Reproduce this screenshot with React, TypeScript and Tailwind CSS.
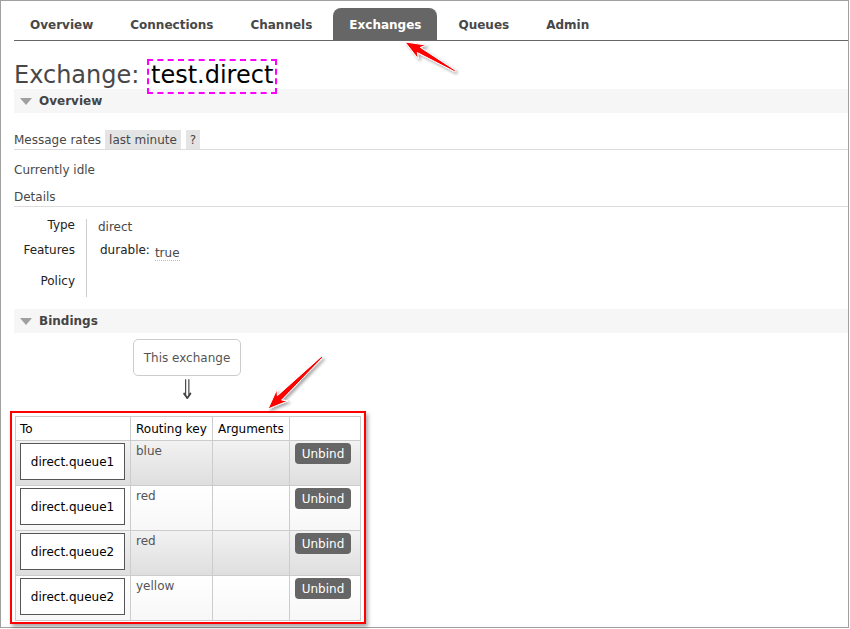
import React from 'react';

const tabs = ['Overview', 'Connections', 'Channels', 'Exchanges', 'Queues', 'Admin'];

const bindings = [
  { to: 'direct.queue1', key: 'blue' },
  { to: 'direct.queue1', key: 'red' },
  { to: 'direct.queue2', key: 'red' },
  { to: 'direct.queue2', key: 'yellow' },
];

// red annotation arrow, tail -> tip
function arrowPoints(x1: number, y1: number, x2: number, y2: number) {
  const len = Math.hypot(x2 - x1, y2 - y1);
  const dx = (x2 - x1) / len;
  const dy = (y2 - y1) / len;
  const nx = -dy;
  const ny = dx;
  const hl = 16;
  const hw = 8;
  const sw = 3;
  const tw = 0.8;
  const bx = x2 - dx * hl;
  const by = y2 - dy * hl;
  const wx = x2 - dx * (hl + 4);
  const wy = y2 - dy * (hl + 4);
  const pts = [
    [x1 + nx * tw, y1 + ny * tw],
    [bx + nx * sw, by + ny * sw],
    [wx + nx * hw, wy + ny * hw],
    [x2, y2],
    [wx - nx * hw, wy - ny * hw],
    [bx - nx * sw, by - ny * sw],
    [x1 - nx * tw, y1 - ny * tw],
  ];
  return pts.map((p) => `${p[0].toFixed(1)},${p[1].toFixed(1)}`).join(' ');
}

function SectionHeader({ title }: { title: string }) {
  return (
    <div className="flex h-[24px] items-center bg-[#f6f6f6]">
      <svg width="12" height="7" viewBox="0 0 12 7" className="ml-[6px] mr-[7px]">
        <polygon points="0,0 12,0 6,7" fill="#a0a0a0" />
      </svg>
      <span className="font-bold text-[#444]">{title}</span>
    </div>
  );
}

export default function App() {
  return (
    <div className="relative h-[629px] w-[850px] bg-white font-['DejaVu_Sans',sans-serif] text-[12px] leading-[14px] text-[#484848]">
      <div className="h-[628px] w-[849px] border border-[#a0a0a0] pl-[13px]">
        {/* tabs */}
        <div className="mt-[7px] flex h-[32px] items-stretch gap-[5px]">
          {tabs.map((t) => (
            <div
              key={t}
              className={`flex items-center rounded-t-[8px] px-[16px] pt-[2px] font-bold ${
                t === 'Exchanges' ? 'bg-[#666] text-white' : 'text-[#484848]'
              }`}
            >
              {t}
            </div>
          ))}
        </div>
        <div className="h-px bg-[#666]" />

        <h1 className="mt-[21px] text-[24px] leading-[26px] text-[#484848]">
          Exchange:{' '}
          <span className="border-2 border-dashed border-[#f0f] px-[2px] pb-[3px] text-black">
            test.direct
          </span>
        </h1>

        <div className="mt-[1px]">
          <SectionHeader title="Overview" />
        </div>

        <div className="mt-[17px] flex h-[20px] items-stretch border-b border-[#ddd]">
          <span className="flex items-center">Message rates</span>
          <span className="ml-[4px] flex items-center bg-[#e4e4e4] px-[4px]">last minute</span>
          <span className="ml-[5px] flex items-center bg-[#e4e4e4] px-[4px]">?</span>
        </div>

        <div className="mt-[12px] leading-[16px]">Currently idle</div>
        <div className="mt-[11px] border-b border-[#ddd] pb-[1px] leading-[16px]">Details</div>

        {/* details table */}
        <div className="mt-[11px] flex">
          <div className="w-[72px] pr-[11px] text-right text-[#222]">
            <div>Type</div>
            <div className="mt-[11px]">Features</div>
            <div className="mt-[17px]">Policy</div>
          </div>
          <div className="mt-[1px] h-[78px] border-l border-[#ccc] pl-[11px]">
            <div className="mt-[1px]">direct</div>
            <div className="mt-[9px] flex items-start pl-[2px]">
              <span className="text-[#222]">durable:</span>
              <span className="ml-[5px] mt-[3px] border-b border-dotted border-[#bbb]">true</span>
            </div>
          </div>
        </div>

        <div className="mt-[12px]">
          <SectionHeader title="Bindings" />
        </div>

        <div className="ml-[119px] mt-[6px] flex h-[37px] w-[108px] items-center justify-center rounded-[5px] border border-[#ccc] text-[#555]">
          This exchange
        </div>
        <div className="ml-[119px] mt-[5px] flex h-[19px] w-[108px] items-center justify-center text-[#444]">
          <span className="inline-block scale-x-[1.15] scale-y-[1.6] text-[17px] leading-[19px]">⇓</span>
        </div>

        {/* bindings table */}
        <div className="ml-[-4px] mt-[11px] w-[356px] border-2 border-[#f00] px-[3px] pb-[1px] pt-[3px] shadow-[2px_3px_4px_rgba(0,0,0,0.35)]">
          <table className="w-[346px] border-collapse">
            <thead>
              <tr className="h-[24px] bg-white text-black">
                <th className="w-[115px] border border-[#ccc] pl-[4px] text-left font-normal">To</th>
                <th className="w-[82px] border border-[#ccc] pl-[5px] text-left font-normal">Routing key</th>
                <th className="w-[77px] border border-[#ccc] pl-[5px] text-left font-normal">Arguments</th>
                <th className="border border-[#ccc]" />
              </tr>
            </thead>
            <tbody>
              {bindings.map((b, i) => (
                <tr
                  key={i}
                  className={`h-[45px] ${
                    i % 2 === 0
                      ? 'bg-gradient-to-b from-[#f2f2f2] to-[#dedede]'
                      : 'bg-gradient-to-b from-white to-[#f7f7f7]'
                  }`}
                >
                  <td className="border border-[#ccc] pl-[4px] pt-[2px] align-top">
                    <div className="flex h-[37px] w-[105px] items-center justify-center border border-[#555] bg-white text-black">
                      {b.to}
                    </div>
                  </td>
                  <td className="border border-[#ccc] pl-[5px] pt-[3px] align-top text-[#555]">{b.key}</td>
                  <td className="border border-[#ccc]" />
                  <td className="border border-[#ccc] pl-[5px] pt-[2px] align-top">
                    <button className="flex h-[21px] w-[56px] items-center justify-center rounded-[4px] bg-[#666] text-white">
                      Unbind
                    </button>
                  </td>
                </tr>
              ))}
            </tbody>
          </table>
        </div>
      </div>

      {/* annotation arrows */}
      <svg className="pointer-events-none absolute left-0 top-0" width="850" height="629">
        <defs>
          <filter id="arrowShadow" x="-20%" y="-20%" width="140%" height="140%">
            <feDropShadow dx="2" dy="2" stdDeviation="1.5" floodColor="#000" floodOpacity="0.35" />
          </filter>
        </defs>
        <polygon
          points={arrowPoints(455, 71, 405, 42)}
          fill="#f00"
          stroke="#fff"
          strokeWidth="1"
          filter="url(#arrowShadow)"
        />
        <polygon
          points={arrowPoints(322, 357, 268, 409)}
          fill="#f00"
          stroke="#fff"
          strokeWidth="1"
          filter="url(#arrowShadow)"
        />
      </svg>
    </div>
  );
}
